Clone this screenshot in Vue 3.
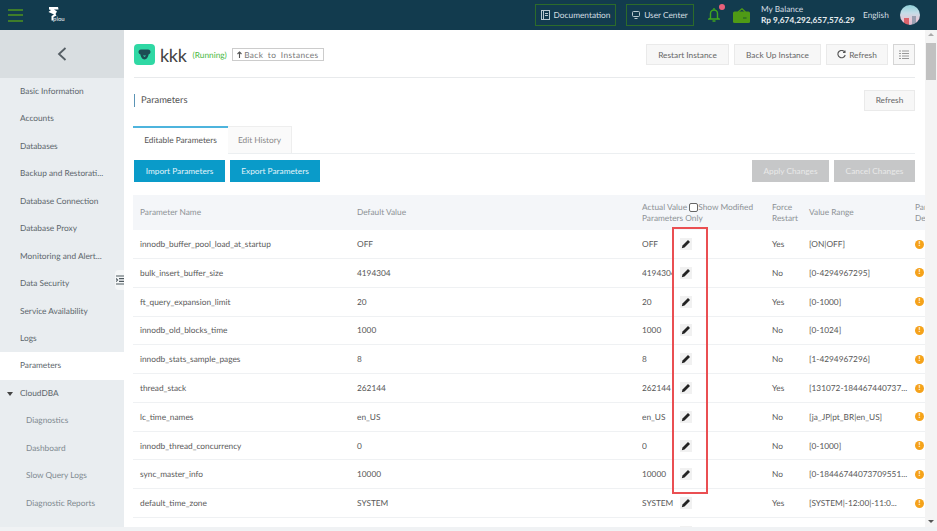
<script setup>
const menu = [
  { label: "Basic Information" },
  { label: "Accounts" },
  { label: "Databases" },
  { label: "Backup and Restorati..." },
  { label: "Database Connection" },
  { label: "Database Proxy" },
  { label: "Monitoring and Alert..." },
  { label: "Data Security" },
  { label: "Service Availability" },
  { label: "Logs" },
  { label: "Parameters", active: true },
  { label: "CloudDBA", group: true },
  { label: "Diagnostics", sub: true },
  { label: "Dashboard", sub: true },
  { label: "Slow Query Logs", sub: true },
  { label: "Diagnostic Reports", sub: true }
]

const rows = [
  ["innodb_buffer_pool_load_at_startup", "OFF", "OFF", "Yes", "[ON|OFF]"],
  ["bulk_insert_buffer_size", "4194304", "4194304", "No", "[0-4294967295]"],
  ["ft_query_expansion_limit", "20", "20", "Yes", "[0-1000]"],
  ["innodb_old_blocks_time", "1000", "1000", "No", "[0-1024]"],
  ["innodb_stats_sample_pages", "8", "8", "No", "[1-4294967296]"],
  ["thread_stack", "262144", "262144", "Yes", "[131072-184467440737..."],
  ["lc_time_names", "en_US", "en_US", "No", "[ja_JP|pt_BR|en_US]"],
  ["innodb_thread_concurrency", "0", "0", "No", "[0-1000]"],
  ["sync_master_info", "10000", "10000", "No", "[0-18446744073709551..."],
  ["default_time_zone", "SYSTEM", "SYSTEM", "Yes", "[SYSTEM|-12:00|-11:0..."],
  ["", "", "", "", ""]
]
</script>

<template>
  <div class="page">
    <header class="topbar">
      <div class="hamburger"><i></i><i></i><i></i></div>
      <div class="logo">
        <svg width="11" height="14" viewBox="0 0 11 14">
          <path d="M1 0h9l0.500 2.500H6L9 4.500 7.500 7l1 1.500-3 1.500v3.500H3.500V9L6 7.500 0.500 5 3 3 1 2.500z" fill="#fff" />
        </svg>
        <span>plou</span>
      </div>

      <div class="top-right">
        <div class="top-link doc">
          <svg width="9" height="10" viewBox="0 0 9 10" fill="none" stroke="#b9cad0">
            <rect x="0.500" y="0.500" width="8" height="9" />
            <path d="M2.500 1v8M4 3.500h3M4 5.500h3" />
          </svg>
          Documentation
        </div>
        <div class="top-link user">
          <svg width="8" height="8" viewBox="0 0 8 8" fill="none" stroke="#b9cad0">
            <rect x="0.500" y="0.500" width="7" height="5" rx="1" />
            <path d="M2.500 7.500h3" />
          </svg>
          User Center
        </div>
        <div class="bell">
          <svg width="12" height="16" viewBox="0 0 12 16" fill="none" stroke="#3fa51e" stroke-width="1.400">
            <path d="M2.500 11V6.500a3.500 3.500 0 0 1 7 0V11l1.500 1H1zM4.500 14h3M6 1v2" />
          </svg>
          <span class="dot"></span>
        </div>
        <svg class="wallet" width="17" height="15" viewBox="0 0 17 15">
          <path d="M5 4l4-3.200L12.500 4" fill="none" stroke="#4f9a15" stroke-width="1.300" />
          <rect y="3.500" width="17" height="11.500" rx="1.500" fill="#4f9a15" />
          <rect x="10" y="9.500" width="3.500" height="1" fill="#1f5a2a" />
        </svg>
        <div class="balance">
          <div>My Balance</div>
          <b>Rp 9,674,292,657,576.29</b>
        </div>
        <div class="lang">English</div>
        <div class="avatar"></div>
      </div>
    </header>

    <div class="body">
      <aside class="sidebar">
        <div class="back">
          <svg width="10" height="14" viewBox="0 0 10 14" fill="none" stroke="#555e64" stroke-width="1.800">
            <path d="M8.500 1L2 7l6.500 6" />
          </svg>
        </div>
        <div
          class="menu-item"
          v-for="item in menu"
          :key="item.label"
          :class="{ active: item.active, sub: item.sub }"
        >
          <span v-if="item.group" class="caret"></span>
          {{ item.label }}
        </div>
        <div class="toggle">
          <svg width="8" height="10" viewBox="0 0 8 10" fill="none" stroke="#4f5a60" stroke-width="1.200">
            <path d="M0 1h8M3 3.700h5M3 6.300h5M0 9h8M0 3.500l1.500 1.500L0 6.500" />
          </svg>
        </div>
      </aside>

      <main class="main">
        <div class="title-row">
          <div class="instance-icon">
            <svg width="13" height="11" viewBox="0 0 13 11">
              <path d="M3 0.500h7a2.500 2.500 0 0 1 2.500 2.500c0 1.200-.8 2-1.800 2.300C10.200 7.800 8.800 10.500 6.500 10.500S2.800 7.800 2.300 5.300C1.300 5 .5 4.200 .5 3A2.500 2.500 0 0 1 3 .5z" fill="#1d4c54" />
              <path d="M4.800 6.500h3.400L6.500 8z" fill="#2fd8a4" />
            </svg>
          </div>
          <span class="instance-name">kkk</span>
          <span class="status">(Running)</span>
          <div class="back-link">
            <svg width="5" height="7" viewBox="0 0 5 7" fill="none" stroke="#555" stroke-width="1.100">
              <path d="M2.500 7V1M0.500 3l2-2 2 2" />
            </svg>
            Back to Instances
          </div>
          <div class="title-actions">
            <button class="btn restart" type="button">Restart Instance</button>
            <button class="btn backup" type="button">Back Up Instance</button>
            <button class="btn refresh-top" type="button">
              <svg width="9" height="9" viewBox="0 0 9 9" fill="none" stroke="#555" stroke-width="1.100">
                <path d="M7.800 2.200A3.700 3.700 0 1 0 8.200 5M8 0.500v2H6" />
              </svg>
              Refresh
            </button>
            <button class="btn list" type="button">
              <svg width="10" height="9" viewBox="0 0 10 9" fill="none" stroke="#999">
                <path d="M0 1h2M3 1h7M0 3.500h2M3 3.500h7M0 6h2M3 6h7M0 8.500h2M3 8.500h7" />
              </svg>
            </button>
          </div>
        </div>

        <div class="section-row">
          <span class="section-title">Parameters</span>
          <button class="btn section-refresh" type="button">Refresh</button>
        </div>

        <div class="tabs">
          <div class="tab active">Editable Parameters</div>
          <div class="tab">Edit History</div>
        </div>

        <div class="tool-row">
          <button class="btn primary import" type="button">Import Parameters</button>
          <button class="btn primary export" type="button">Export Parameters</button>
          <button class="btn disabled apply" type="button">Apply Changes</button>
          <button class="btn disabled cancel" type="button">Cancel Changes</button>
        </div>

        <div class="table">
          <div class="row head">
            <div class="c-name">Parameter Name</div>
            <div class="c-default">Default Value</div>
            <div class="c-actual head-actual">
              Actual Value <span class="check"></span>Show Modified Parameters Only
            </div>
            <div class="c-force">Force Restart</div>
            <div class="c-range">Value Range</div>
            <div class="c-desc">Parameter Description</div>
          </div>
          <div class="row" v-for="(row, i) in rows" :key="i">
            <div class="c-name">{{ row[0] }}</div>
            <div class="c-default">{{ row[1] }}</div>
            <div class="c-actual">
              <span class="actual-value">{{ row[2] }}</span>
              <span class="edit">
                <svg width="10" height="10" viewBox="0 0 10 10">
                  <path d="M7 1l2 2-5.500 5.500L0.800 9.200l0.700-2.700z" fill="#222" />
                </svg>
              </span>
            </div>
            <div class="c-force">{{ row[3] }}</div>
            <div class="c-range">{{ row[4] }}</div>
            <div class="c-desc"><span v-if="row[0]" class="info">!</span></div>
          </div>
        </div>

        <div class="highlight"></div>
      </main>

      <div class="scrollbar">
        <span class="arrow up"></span>
        <span class="thumb"></span>
        <span class="arrow down"></span>
      </div>
    </div>
  </div>
</template>

<style>
body {
  margin: 0;
  overflow: hidden;
}
</style>

<style scoped>
.page {
  width: 937px;
  height: 531px;
  display: flex;
  flex-direction: column;
  overflow: hidden;
  background: #f0f2f4;
  font-family: Lato, "Open Sans", sans-serif;
  font-size: 8.300px;
  text-rendering: geometricPrecision;
  color: #555;
}

.topbar {
  height: 30px;
  flex-shrink: 0;
  display: flex;
  align-items: center;
  background: #123b4e;
  color: #d5dfe3;
}

.hamburger {
  width: 15px;
  margin-left: 8px;
  display: flex;
  flex-direction: column;
  gap: 3.500px;
}

.hamburger i {
  height: 2px;
  background: #3f7d2a;
}

.logo {
  position: relative;
  width: 20px;
  height: 16px;
  margin-left: 25px;
  margin-top: -1px;
}

.logo span {
  position: absolute;
  left: 5px;
  top: 9px;
  font-size: 6px;
  font-weight: 700;
  color: #c9d4d8;
}

.top-right {
  margin-left: auto;
  display: flex;
  align-items: center;
}

.top-link {
  height: 22px;
  box-sizing: border-box;
  display: flex;
  align-items: center;
  justify-content: center;
  gap: 4px;
  border: 1px solid #2c6b2a;
  color: #d5dfe3;
}

.doc {
  width: 81px;
}

.user {
  width: 68px;
  margin-left: 10px;
}

.bell {
  position: relative;
  height: 16px;
  margin-left: 14px;
}

.dot {
  position: absolute;
  right: -5px;
  top: -3px;
  width: 6px;
  height: 6px;
  border-radius: 50%;
  background: #e8607a;
}

.wallet {
  margin-left: 13px;
}

.balance {
  width: 102px;
  margin-left: 11px;
  line-height: 11px;
}

.balance b {
  font-weight: 700;
  color: #e6ecee;
  white-space: nowrap;
}

.lang {
  width: 37px;
}

.avatar {
  width: 20px;
  height: 20px;
  margin-right: 17px;
  border-radius: 50%;
  background:
    linear-gradient(90deg, transparent 18%, #d9626a 18%, #d9626a 45%, transparent 45%) 0 100% / 100% 35% no-repeat,
    linear-gradient(90deg, transparent 58%, #9a9fb0 58%, #9a9fb0 78%, transparent 78%) 0 100% / 100% 45% no-repeat,
    linear-gradient(180deg, #8fd0d8 0%, #c5dde8 40%, #e8c7d6 75%, #d8b8cc 100%);
}

.body {
  flex: 1;
  min-height: 0;
  display: flex;
  margin-bottom: 4px;
}

.sidebar {
  position: relative;
  width: 124px;
  flex-shrink: 0;
  background: #e9edf0;
}

.back {
  height: 48px;
  display: flex;
  align-items: center;
  justify-content: center;
  background: #d9dee1;
}

.menu-item {
  position: relative;
  height: 27.450px;
  line-height: 27.450px;
  padding-left: 20px;
  color: #5c666c;
  white-space: nowrap;
}

.menu-item.active {
  background: #fff;
}

.menu-item.sub {
  padding-left: 26px;
  color: #808a90;
}

.caret {
  position: absolute;
  left: 7px;
  top: 12px;
  border: 3.500px solid transparent;
  border-top: 4px solid #444;
  border-bottom: 0;
}

.toggle {
  position: absolute;
  right: 0;
  top: 240px;
  width: 9px;
  height: 20px;
  display: flex;
  align-items: center;
  justify-content: center;
  background: #f4f6f7;
  border-radius: 4px 0 0 4px;
}

.main {
  position: relative;
  flex: 1;
  min-width: 0;
  overflow: hidden;
  padding-left: 10px;
  background: #fff;
}

.title-row {
  width: 781px;
  height: 48px;
  box-sizing: border-box;
  display: flex;
  align-items: center;
  border-bottom: 1px solid #e8eaec;
  padding-top: 2px;
}

.instance-icon {
  width: 21px;
  height: 21px;
  display: flex;
  align-items: center;
  justify-content: center;
  border-radius: 4px;
  background: #2fd8a4;
}

.instance-name {
  margin-left: 5px;
  font-size: 18px;
  letter-spacing: -0.300px;
  color: #444;
}

.status {
  margin-left: 6px;
  color: #46b83c;
}

.back-link {
  width: 92px;
  height: 13px;
  box-sizing: border-box;
  margin-left: 5px;
  display: flex;
  align-items: center;
  justify-content: center;
  gap: 2px;
  border: 1px solid #ccc;
  letter-spacing: 0.400px;
  word-spacing: 2px;
  color: #777;
  white-space: nowrap;
}

.title-actions {
  margin-left: auto;
  display: flex;
  gap: 5px;
}

.btn {
  height: 21px;
  padding: 0;
  display: flex;
  align-items: center;
  justify-content: center;
  gap: 3px;
  border: 1px solid #eaeaea;
  background: #f7f7f7;
  color: #666;
  font-family: inherit;
  font-size: 8.300px;
  white-space: nowrap;
}

.restart {
  width: 83px;
}

.backup {
  width: 87px;
}

.refresh-top {
  width: 62px;
}

.list {
  width: 22px;
  border-color: #d5d5d5;
}

.section-row {
  width: 781px;
  height: 44px;
  display: flex;
  align-items: center;
  justify-content: space-between;
}

.section-title {
  padding-left: 6px;
  line-height: 13px;
  border-left: 1px solid #5b94b5;
  font-size: 9.400px;
  color: #555;
}

.section-refresh {
  width: 51px;
}

.tabs {
  width: 782px;
  height: 27px;
  margin-top: 4px;
  margin-left: -1px;
  display: flex;
  border-bottom: 1px solid #eceff1;
}

.tab {
  width: 64px;
  box-sizing: border-box;
  display: flex;
  align-items: center;
  justify-content: center;
  background: #fafafa;
  color: #888;
  border-top: 1px solid #eee;
  border-right: 1px solid #eee;
}

.tab.active {
  width: 95px;
  height: 28px;
  padding-bottom: 2px;
  background: #fff;
  color: #555;
  border-top: 2px solid #4eb4dd;
  border-right: 0;
}

.tool-row {
  width: 781px;
  margin-top: 6px;
  display: flex;
  gap: 5px;
}

.tool-row .btn {
  height: 22px;
  border: 0;
}

.primary {
  background: #0a9bc9;
  color: #e4f4fa;
}

.import {
  width: 91px;
}

.export {
  width: 90px;
}

.disabled {
  background: #c6c7c8;
  color: #e9e9e9;
}

.apply {
  width: 77px;
  margin-left: auto;
}

.cancel {
  width: 81px;
}

.table {
  width: 792px;
  margin-top: 13px;
  margin-left: -1px;
}

.row {
  height: 28.780px;
  box-sizing: border-box;
  display: grid;
  grid-template-columns: 217px 285px 130px 37px 106px 16px;
  align-items: center;
  padding-left: 7px;
  border-bottom: 1px solid #eff1f3;
  color: #5a5a5a;
  white-space: nowrap;
}

.row.head {
  height: 35.300px;
  background: #f4f6f9;
  border-bottom: 0;
  color: #8d9296;
  line-height: 11px;
}

.head-actual,
.head .c-force,
.head .c-desc {
  white-space: normal;
}

.check {
  display: inline-block;
  width: 9px;
  height: 9px;
  box-sizing: border-box;
  vertical-align: -2px;
  border: 1px solid #666;
  border-radius: 2px;
  background: #fff;
}

.c-actual {
  display: flex;
  align-items: center;
}

.head-actual {
  display: block;
  width: 118px;
}

.actual-value {
  width: 32px;
  overflow: hidden;
}

.edit {
  width: 12px;
  height: 12px;
  margin-left: 6px;
  display: flex;
  align-items: center;
  justify-content: center;
  background: #f1f1f1;
}

.c-desc {
  overflow: hidden;
}

.info {
  display: block;
  width: 9px;
  height: 9px;
  border-radius: 50%;
  background: #f5a21a;
  color: #fff;
  font-size: 7px;
  font-weight: 700;
  line-height: 9px;
  text-align: center;
}

.highlight {
  position: absolute;
  left: 548px;
  top: 197px;
  width: 36px;
  height: 267px;
  box-sizing: border-box;
  border: 2px solid #ea4f52;
  pointer-events: none;
}

.scrollbar {
  position: relative;
  width: 12px;
  flex-shrink: 0;
  background: #f4f4f4;
}

.thumb {
  position: absolute;
  left: 1px;
  top: 13px;
  width: 10px;
  height: 37px;
  background: #c1c1c1;
}

.arrow {
  position: absolute;
  left: 3px;
  border: 3px solid transparent;
}

.arrow.up {
  top: 3px;
  border-top: 0;
  border-bottom: 3px solid #aaa;
}

.arrow.down {
  bottom: 4px;
  border-bottom: 0;
  border-top: 3px solid #555;
}
</style>
